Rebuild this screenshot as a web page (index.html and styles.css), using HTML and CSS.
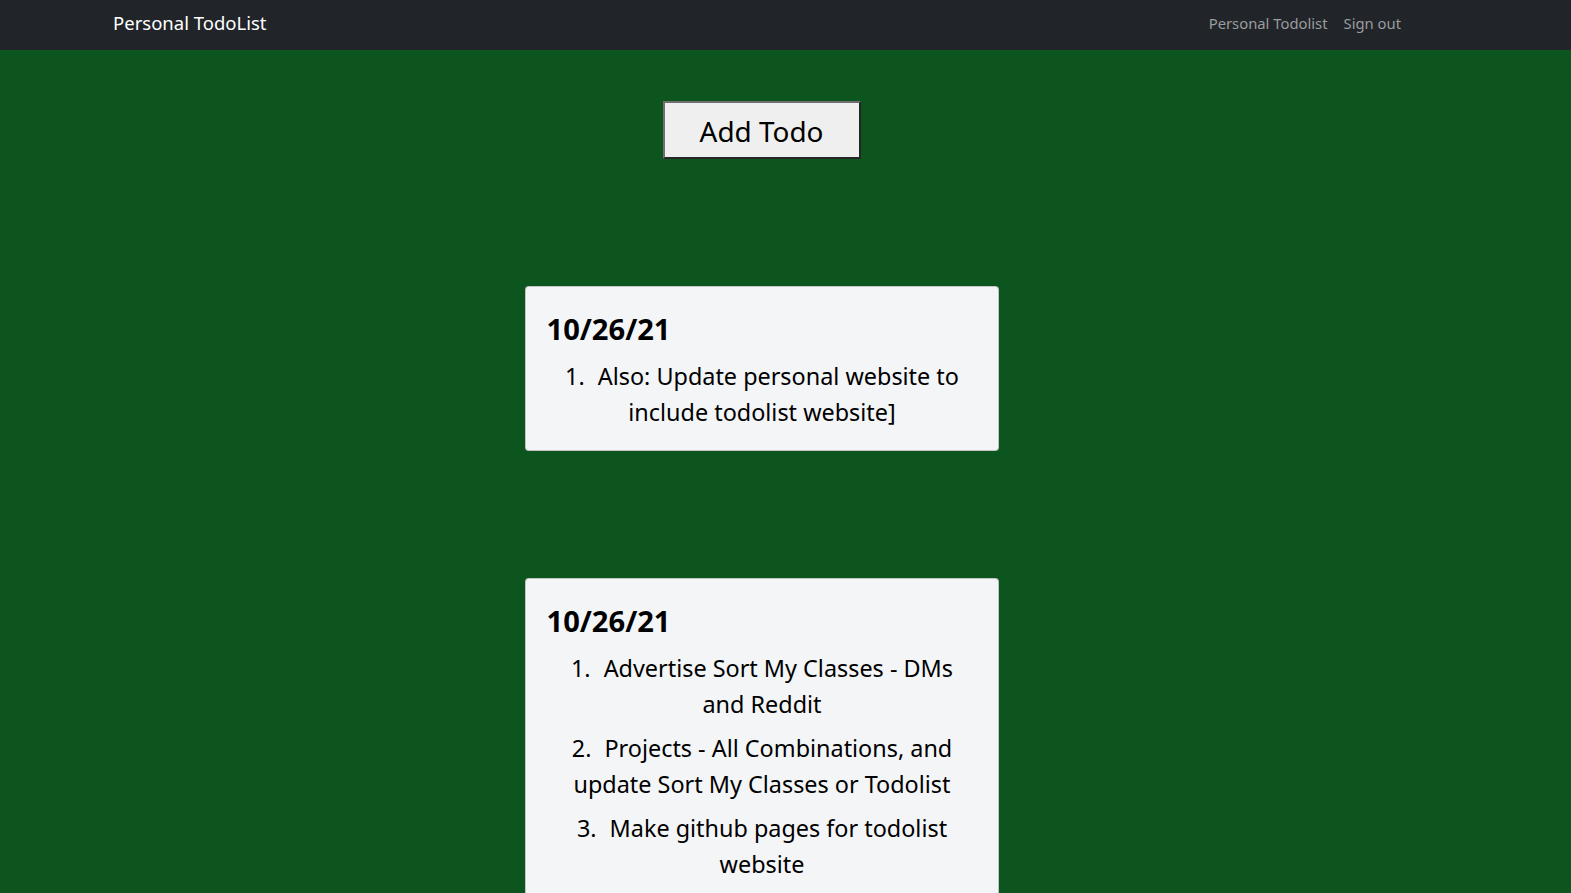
FILE: index.html
```html
<!DOCTYPE html>
<html lang="en">
<head>
<meta charset="utf-8">
<title>Personal TodoList</title>
<link rel="stylesheet" href="styles.css">
</head>
<body>
<header class="navbar">
  <div class="frame">
    <div class="container">
      <a class="brand" href="#">Personal TodoList</a>
      <nav class="nav-links">
        <a class="nav-link" href="#">Personal Todolist</a>
        <a class="nav-link" href="#">Sign out</a>
      </nav>
    </div>
  </div>
</header>
<main class="frame main">
  <button class="add-btn" type="button">Add Todo</button>
  <section class="card">
    <h3 class="card-title">10/26/21</h3>
    <ol class="todo-list">
      <li>Also: Update personal website to include todolist website]</li>
    </ol>
  </section>
  <section class="card">
    <h3 class="card-title">10/26/21</h3>
    <ol class="todo-list">
      <li>Advertise Sort My Classes - DMs and Reddit</li>
      <li>Projects - All Combinations, and update Sort My Classes or Todolist</li>
      <li>Make github pages for todolist website</li>
    </ol>
  </section>
</main>
</body>
</html>
```
FILE: styles.css
```css
html, body {
  margin: 0;
  padding: 0;
  background: #0d551f;
}
body {
  font-family: "Noto Sans", "Open Sans", sans-serif;
  color: #000;
  min-height: 100vh;
}
.frame {
  width: 1523px;
}
.navbar {
  background: #212529;
  height: 50px;
}
.navbar .frame {
  width: 1520px;
  height: 100%;
}
.container {
  width: 1320px;
  margin: 0 auto;
  padding: 0 12px;
  box-sizing: border-box;
  height: 100%;
  display: flex;
  align-items: center;
  justify-content: space-between;
}
.brand {
  color: #fff;
  text-decoration: none;
  font-size: 18.5px;
  line-height: 1;
  margin-top: -3px;
  margin-left: 1px;
}
.nav-links {
  display: flex;
  margin-top: -5px;
  margin-right: -1px;
}
.nav-link {
  color: #9a9c9f;
  text-decoration: none;
  font-size: 14.8px;
  padding: 0 8px;
}
.main {
  display: flex;
  flex-direction: column;
  align-items: center;
  padding-bottom: 40px;
}
.add-btn {
  margin-top: 51px;
  height: 58px;
  width: 198px;
  padding: 4px 0 0;
  box-sizing: border-box;
  background: #efefef;
  border-width: 2px;
  border-style: solid;
  border-color: #6f6f6f #262626 #262626 #6f6f6f;
  font-family: "Noto Sans", sans-serif;
  font-size: 27.9px;
  color: #000;
  line-height: 1;
}
.card {
  margin-top: 127px;
  width: 474px;
  box-sizing: border-box;
  background: #f4f5f7;
  border: 1px solid rgba(0, 0, 0, 0.2);
  border-radius: 4px;
  padding: 25px 20px 19px 21px;
}
.card-title {
  margin: 0 0 11px;
  font-size: 29.1px;
  font-weight: 700;
  line-height: 35px;
}
.todo-list {
  list-style: none;
  margin: 0;
  padding: 0 10px;
  counter-reset: item;
  text-align: center;
  font-size: 23.4px;
  line-height: 36.3px;
}
.todo-list li {
  counter-increment: item;
}
.todo-list li + li {
  margin-top: 7.4px;
}
.todo-list li::before {
  content: counter(item) ".";
  margin-right: 13px;
}
```
